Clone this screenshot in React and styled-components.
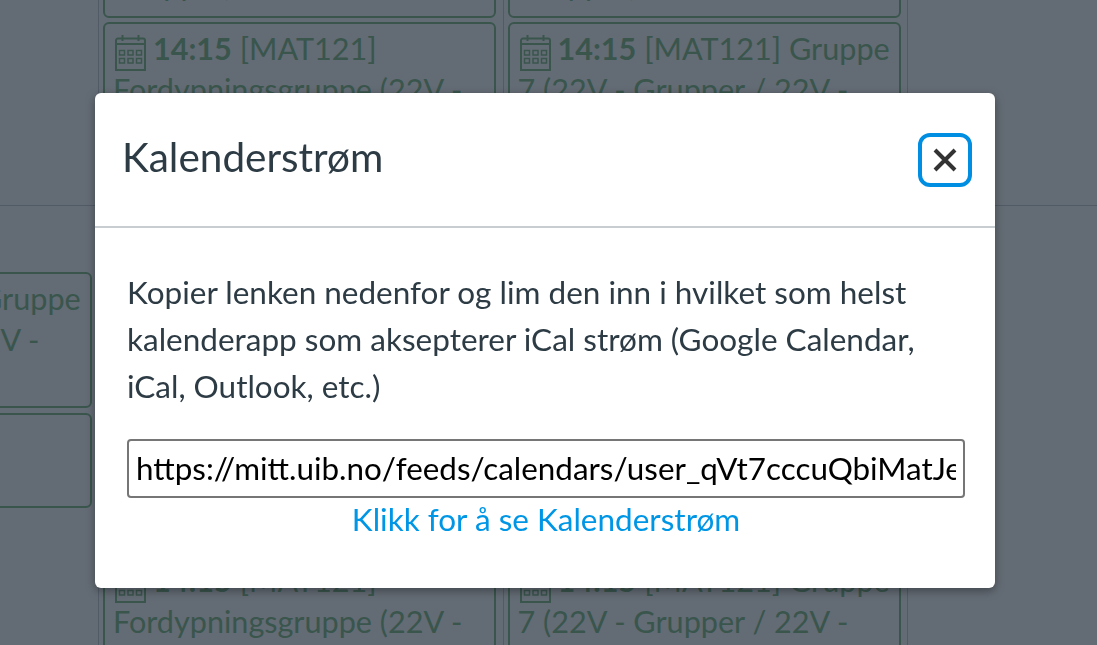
import styled, { createGlobalStyle } from "styled-components";

const GlobalStyle = createGlobalStyle`
  html, body {
    margin: 0;
    height: 100%;
    overflow: hidden;
    background: #fff;
    font-family: Lato, "Open Sans", sans-serif;
  }
`;

const Calendar = styled.div`
  width: 1618px;
  margin: -123.5px 0 0 -306.5px;
`;

const Row = styled.div`
  display: grid;
  grid-template-columns: repeat(4, 404.5px);
  border-bottom: 1px solid #b8c0c6;
`;

const Day = styled.div`
  display: flex;
  flex-direction: column;
  gap: ${({ $gap }) => $gap || 5}px;
  padding: ${({ $top }) => $top || 0}px 6.5px 6px 4px;
  border-left: 1px solid #b8c0c6;
`;

const Event = styled.div`
  border: 2px solid #5aa862;
  border-radius: 6px;
  padding: 3.5px 8px ${({ $bottom }) => $bottom || 5.5}px;
  color: #5aa862;
  font-size: 30.6px;
  line-height: 41px;
  white-space: nowrap;
  overflow: hidden;

  b {
    font-weight: 700;
  }
`;

const CalIcon = styled.svg`
  width: 31px;
  height: 36px;
  vertical-align: -8px;
  margin: 0 7px -3.5px 2px;
`;

const CalendarGlyph = () => (
  <CalIcon viewBox="0 0 31 36" fill="none" stroke="currentColor" strokeWidth="2">
    <path d="M1 35V5.5A2 2 0 0 1 3 3.5H28A2 2 0 0 1 30 5.5V35Z" />
    <path d="M1 9h29M7.5 0v6M23.5 0v6" />
    <g strokeWidth="1.5">
      <rect x="4.5" y="15.5" width="5" height="4.5" />
      <rect x="13" y="15.5" width="5" height="4.5" />
      <rect x="21.5" y="15.5" width="5" height="4.5" />
      <rect x="4.5" y="23.5" width="5" height="4.5" />
      <rect x="13" y="23.5" width="5" height="4.5" />
      <rect x="21.5" y="23.5" width="5" height="4.5" />
    </g>
  </CalIcon>
);

const Overlay = styled.div`
  position: fixed;
  inset: 0;
  padding: 93px 0 0 95px;
  background: rgba(47, 58, 70, 0.75);
`;

const Modal = styled.div`
  width: 900px;
  height: 495px;
  background: #fff;
  border-radius: 6px;
  box-shadow: 0 3px 10px rgba(0, 0, 0, 0.35);
  color: #2d3b45;
`;

const Header = styled.header`
  display: flex;
  align-items: center;
  justify-content: space-between;
  height: 133px;
  padding: 0 23px 0 27px;
  border-bottom: 2px solid #c7cdd1;
`;

const Title = styled.h2`
  margin: 0 0 6px;
  font-size: 40.5px;
  font-weight: 400;
  line-height: 44px;
`;

const CloseButton = styled.button`
  display: flex;
  align-items: center;
  justify-content: center;
  width: 54px;
  height: 54px;
  margin-top: 1px;
  padding: 0;
  background: #fff;
  border: 4px solid #008ee2;
  border-radius: 12px;
`;

const Body = styled.div`
  display: flex;
  flex-direction: column;
  padding: 41px 30px 0 32px;
`;

const Text = styled.p`
  margin: 0 0 29px;
  font-size: 31.5px;
  line-height: 47px;
`;

const FeedInput = styled.input`
  box-sizing: border-box;
  width: 100%;
  height: 59px;
  padding: 0 7px 2px;
  border: 2px solid #767676;
  border-radius: 4px;
  background: #fff;
  color: #000;
  font: 400 31.4px Lato, sans-serif;
`;

const FeedLink = styled.a`
  margin-top: -1px;
  color: #0096e6;
  font-size: 31.5px;
  line-height: 44px;
  text-align: center;
  text-decoration: none;
`;

const Line1 = () => (
  <>
    <CalendarGlyph />
    <b>14:15</b> [MAT121]
  </>
);

const Line1Group = () => (
  <>
    <CalendarGlyph />
    <b>14:15</b> [MAT121] Gruppe
  </>
);

const Fordypning = ({ bottom }) => (
  <Event $bottom={bottom}>
    <Line1 />
    <br />
    Fordypningsgruppe (22V -
    <br />
    Grupper)
  </Event>
);

const Gruppe7 = ({ bottom }) => (
  <Event $bottom={bottom}>
    <Line1Group />
    <br />7 (22V - Grupper / 22V -
    <br />
    Grupper)
  </Event>
);

export default function App() {
  return (
    <>
      <GlobalStyle />
      <Calendar>
        <Row>
          <Day />
          <Day $gap={4}>
            <Fordypning bottom={11} />
            <Event>
              <Line1 />
              <br />
              Fordypningsgruppe (22V -
              <br />
              Grupper / 22V -
              <br />
              Grupper)
            </Event>
          </Day>
          <Day $gap={4}>
            <Gruppe7 bottom={11} />
            <Event>
              <Line1Group />
              <br />7 (22V - Grupper / 22V -
              <br />
              Grupper / 22V -
              <br />
              Grupper)
            </Event>
          </Day>
          <Day />
        </Row>
        <Row>
          <Day $top={66}>
            <Gruppe7 />
            <Event>
              <CalendarGlyph />
              <b>16:15</b> [MAT121]
              <br />
              Forelesning
            </Event>
          </Day>
          <Day $top={66}>
            <Fordypning />
            <Fordypning />
            <Fordypning />
          </Day>
          <Day $top={66}>
            <Gruppe7 />
            <Gruppe7 />
            <Gruppe7 />
          </Day>
          <Day $top={66} />
        </Row>
      </Calendar>
      <Overlay>
        <Modal>
          <Header>
            <Title>Kalenderstrøm</Title>
            <CloseButton aria-label="Lukk">
              <svg width="24" height="24" viewBox="0 0 24 24" fill="none" stroke="#333" strokeWidth="4">
                <path d="M2 2l20 20M22 2L2 22" />
              </svg>
            </CloseButton>
          </Header>
          <Body>
            <Text>
              Kopier lenken nedenfor og lim den inn i hvilket som helst
              <br />
              kalenderapp som aksepterer iCal strøm (Google Calendar,
              <br />
              iCal, Outlook, etc.)
            </Text>
            <FeedInput readOnly value="https://mitt.uib.no/feeds/calendars/user_qVt7cccuQbiMatJeKl3xYw9dPz.ics" />
            <FeedLink href="#">Klikk for å se Kalenderstrøm</FeedLink>
          </Body>
        </Modal>
      </Overlay>
    </>
  );
}
